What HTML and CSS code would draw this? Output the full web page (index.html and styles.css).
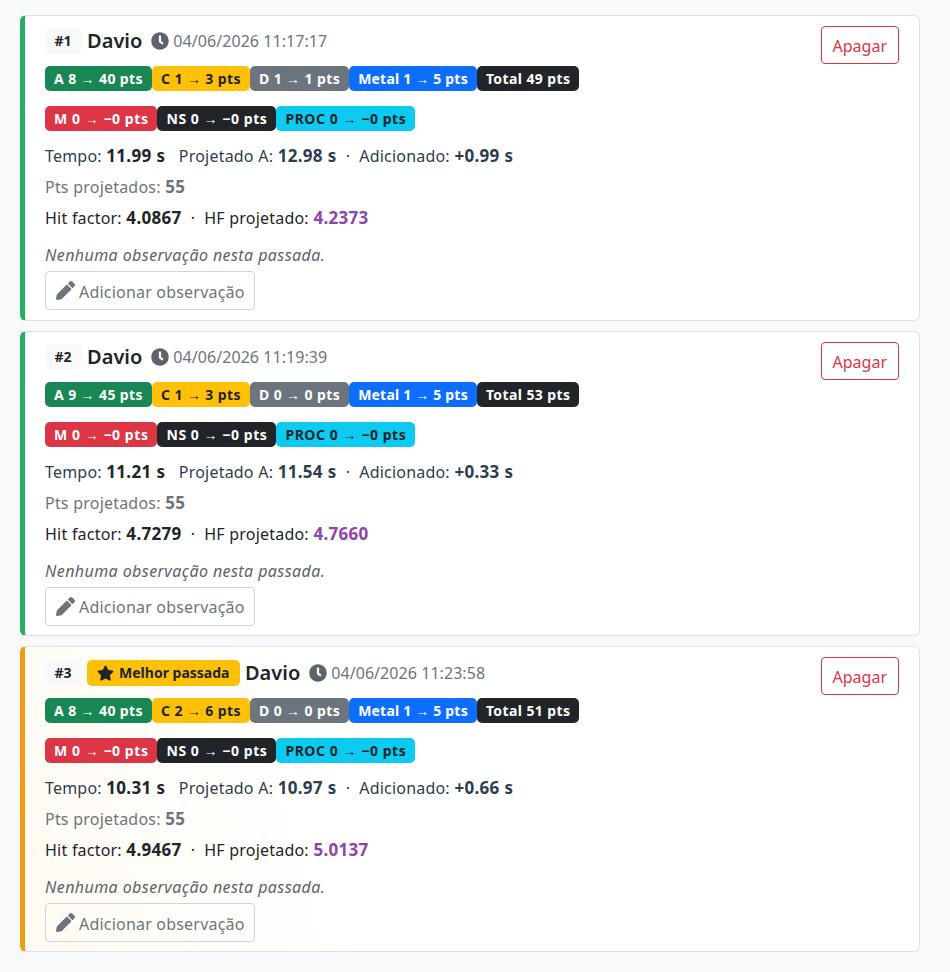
FILE: index.html
```html
<!DOCTYPE html>
<html lang="pt-BR">

<head>
    <meta charset="UTF-8">
    <meta name="viewport" content="width=device-width, initial-scale=1.0">
    <title>Passadas</title>
    <link rel="stylesheet" href="styles.css">
</head>

<body>
    <svg class="icon-defs" aria-hidden="true">
        <symbol id="i-clock" viewBox="0 0 512 512"><path d="M256,8C119,8,8,119,8,256S119,504,256,504,504,393,504,256,393,8,256,8Zm92.49,313h0l-20,25a16,16,0,0,1-22.49,2.5h0l-67-49.72a40,40,0,0,1-15-31.23V112a16,16,0,0,1,16-16h32a16,16,0,0,1,16,16V256l58,42.5A16,16,0,0,1,348.49,321Z"/></symbol>
        <symbol id="i-pencil" viewBox="0 0 512 512"><path d="M497.9 142.1l-46.1 46.1c-4.7 4.7-12.3 4.7-17 0l-111-111c-4.7-4.7-4.7-12.3 0-17l46.1-46.1c18.7-18.7 49.1-18.7 67.9 0l60.1 60.1c18.8 18.7 18.8 49.1 0 67.9zM284.2 99.8L21.6 362.4.4 483.9c-2.9 16.4 11.4 30.6 27.8 27.8l121.5-21.3 262.6-262.6c4.7-4.7 4.7-12.3 0-17l-111-111c-4.8-4.7-12.4-4.7-17.1 0z"/></symbol>
        <symbol id="i-star" viewBox="0 0 576 512"><path d="M259.3 17.8L194 150.2 47.9 171.5c-26.2 3.8-36.7 36.1-17.9 54.6l105.7 103-25 145.5c-4.5 26.3 23.2 46 46.4 33.7L288 439.6l130.7 68.7c23.2 12.2 50.9-7.4 46.4-33.7l-25-145.5 105.7-103c18.8-18.5 8.3-50.8-17.9-54.6L382 150.2 316.7 17.8c-11.7-23.6-45.6-23.9-57.4 0z"/></symbol>
    </svg>

    <div class="list">
        <div class="pass-card">
            <div class="pass-top">
                <div class="pass-main">
                    <div class="pass-title">
                        <span class="pass-num">#1</span>
                        <span class="pass-name">Davio</span>
                        <span class="pass-date"><svg class="icon"><use href="#i-clock"/></svg>04/06/2026 11:17:17</span>
                    </div>
                    <div class="badges">
                        <span class="badge bg-green">A 8 → 40 pts</span>
                        <span class="badge bg-yellow">C 1 → 3 pts</span>
                        <span class="badge bg-gray">D 1 → 1 pts</span>
                        <span class="badge bg-blue">Metal 1 → 5 pts</span>
                        <span class="badge bg-dark">Total 49 pts</span>
                    </div>
                    <div class="badges badges-penalty">
                        <span class="badge bg-red">M 0 → −0 pts</span>
                        <span class="badge bg-dark">NS 0 → −0 pts</span>
                        <span class="badge bg-cyan">PROC 0 → −0 pts</span>
                    </div>
                </div>
                <button class="btn-delete">Apagar</button>
            </div>
            <div class="line line-time">Tempo: <b class="strong-dark">11.99 s</b> &nbsp; Projetado A: <b>12.98 s</b> &nbsp;·&nbsp; Adicionado: <b>+0.99 s</b></div>
            <div class="line line-muted">Pts projetados: <b>55</b></div>
            <div class="line">Hit factor: <b>4.0867</b> &nbsp;·&nbsp; HF projetado: <b class="hf">4.2373</b></div>
            <div class="note">Nenhuma observação nesta passada.</div>
            <button class="btn-note"><svg class="icon"><use href="#i-pencil"/></svg>Adicionar observação</button>
        </div>

        <div class="pass-card">
            <div class="pass-top">
                <div class="pass-main">
                    <div class="pass-title">
                        <span class="pass-num">#2</span>
                        <span class="pass-name">Davio</span>
                        <span class="pass-date"><svg class="icon"><use href="#i-clock"/></svg>04/06/2026 11:19:39</span>
                    </div>
                    <div class="badges">
                        <span class="badge bg-green">A 9 → 45 pts</span>
                        <span class="badge bg-yellow">C 1 → 3 pts</span>
                        <span class="badge bg-gray">D 0 → 0 pts</span>
                        <span class="badge bg-blue">Metal 1 → 5 pts</span>
                        <span class="badge bg-dark">Total 53 pts</span>
                    </div>
                    <div class="badges badges-penalty">
                        <span class="badge bg-red">M 0 → −0 pts</span>
                        <span class="badge bg-dark">NS 0 → −0 pts</span>
                        <span class="badge bg-cyan">PROC 0 → −0 pts</span>
                    </div>
                </div>
                <button class="btn-delete">Apagar</button>
            </div>
            <div class="line line-time">Tempo: <b class="strong-dark">11.21 s</b> &nbsp; Projetado A: <b>11.54 s</b> &nbsp;·&nbsp; Adicionado: <b>+0.33 s</b></div>
            <div class="line line-muted">Pts projetados: <b>55</b></div>
            <div class="line">Hit factor: <b>4.7279</b> &nbsp;·&nbsp; HF projetado: <b class="hf">4.7660</b></div>
            <div class="note">Nenhuma observação nesta passada.</div>
            <button class="btn-note"><svg class="icon"><use href="#i-pencil"/></svg>Adicionar observação</button>
        </div>

        <div class="pass-card best">
            <div class="pass-top">
                <div class="pass-main">
                    <div class="pass-title">
                        <span class="pass-num">#3</span>
                        <span class="best-tag"><svg class="icon"><use href="#i-star"/></svg>Melhor passada</span>
                        <span class="pass-name">Davio</span>
                        <span class="pass-date"><svg class="icon"><use href="#i-clock"/></svg>04/06/2026 11:23:58</span>
                    </div>
                    <div class="badges">
                        <span class="badge bg-green">A 8 → 40 pts</span>
                        <span class="badge bg-yellow">C 2 → 6 pts</span>
                        <span class="badge bg-gray">D 0 → 0 pts</span>
                        <span class="badge bg-blue">Metal 1 → 5 pts</span>
                        <span class="badge bg-dark">Total 51 pts</span>
                    </div>
                    <div class="badges badges-penalty">
                        <span class="badge bg-red">M 0 → −0 pts</span>
                        <span class="badge bg-dark">NS 0 → −0 pts</span>
                        <span class="badge bg-cyan">PROC 0 → −0 pts</span>
                    </div>
                </div>
                <button class="btn-delete">Apagar</button>
            </div>
            <div class="line line-time">Tempo: <b class="strong-dark">10.31 s</b> &nbsp; Projetado A: <b>10.97 s</b> &nbsp;·&nbsp; Adicionado: <b>+0.66 s</b></div>
            <div class="line line-muted">Pts projetados: <b>55</b></div>
            <div class="line">Hit factor: <b>4.9467</b> &nbsp;·&nbsp; HF projetado: <b class="hf">5.0137</b></div>
            <div class="note">Nenhuma observação nesta passada.</div>
            <button class="btn-note"><svg class="icon"><use href="#i-pencil"/></svg>Adicionar observação</button>
        </div>
    </div>
</body>

</html>
```

FILE: styles.css
```css
body {
    font-family: "Noto Sans", "Open Sans", Arial, sans-serif;
    font-size: 16px;
    line-height: 24px;
    background-color: #f8f9fa;
    color: #212529;
    margin: 0;
    padding: 15px 30px 20px 20px;
}

.icon-defs {
    display: none;
}

.icon {
    width: 1em;
    height: 1em;
    fill: currentColor;
    flex: none;
}

.list {
    display: flex;
    flex-direction: column;
    gap: 10px;
}

.pass-card {
    background-color: #fff;
    border: 1px solid #dee2e6;
    border-left: 5px solid #27ae60;
    border-radius: 6px;
    padding: 10px 20px;
    height: 305.6px;
    box-sizing: border-box;
}

.pass-card.best {
    border-left-color: #f39c12;
    background: linear-gradient(75deg, #fffbf2 0%, #fff 35%);
}

.pass-top {
    display: flex;
    justify-content: space-between;
    align-items: flex-start;
}

.pass-title {
    display: flex;
    align-items: center;
    margin-top: 2px;
    height: 26px;
}

.best .pass-title {
    height: 27px;
}

.pass-num {
    background-color: #f8f9fa;
    border-radius: 4px;
    font-size: 14px;
    font-weight: 700;
    padding: 0 9.5px;
    line-height: 26px;
    margin-right: 6px;
}

.best .pass-num {
    line-height: 24px;
}

.best-tag {
    display: flex;
    align-items: center;
    gap: 5px;
    background-color: #ffc107;
    border-radius: 5px;
    font-size: 14px;
    font-weight: 700;
    padding: 0 10.5px 0 10px;
    line-height: 26px;
    margin-right: 5px;
}

.best-tag .icon {
    width: 17px;
    height: 16px;
}

.pass-name {
    font-size: 20px;
    font-weight: 600;
    margin-right: 9px;
}

.pass-date {
    display: flex;
    align-items: center;
    gap: 4px;
    color: #6c757d;
    letter-spacing: .06px;
}

.pass-date .icon {
    width: 18px;
    height: 18px;
    color: #5c636a;
}

.badges {
    display: flex;
    margin-top: 12px;
}

.badges + .badges {
    margin-top: 15px;
}

.badge {
    font-size: 14px;
    font-weight: 700;
    line-height: 25px;
    padding: 0 9px;
    border-radius: 5px;
    color: #fff;
    letter-spacing: .4px;
}

.badge.bg-blue {
    letter-spacing: .2px;
}

.badges-penalty .badge {
    letter-spacing: .55px;
}

.bg-green { background-color: #198754; }
.bg-yellow { background-color: #ffc107; color: #212529; }
.bg-gray { background-color: #6c757d; }
.bg-blue { background-color: #0d6efd; }
.bg-dark { background-color: #212529; }
.bg-red { background-color: #dc3545; }
.bg-cyan { background-color: #0dcaf0; color: #212529; }

.btn-delete {
    font: inherit;
    color: #dc3545;
    background: transparent;
    border: 1px solid #dc3545;
    border-radius: 4px;
    padding: 7px 11px 5px;
    height: 38px;
}

.line {
    margin-top: 7px;
    letter-spacing: .2px;
    word-spacing: .18px;
}

.line b {
    font-size: 17px;
    letter-spacing: .3px;
}

.line-time {
    color: #2c3e50;
    margin-top: 13px;
}

.line-muted {
    color: #6c757d;
}

.hf {
    color: #8e44ad;
}

.strong-dark {
    color: #212529;
}

.note {
    font-style: italic;
    color: #5c636a;
    margin-top: 13px;
    letter-spacing: .42px;
}

.btn-note {
    display: flex;
    align-items: center;
    gap: 4px;
    font: inherit;
    color: #6c757d;
    background: transparent;
    border: 1px solid #ced4da;
    border-radius: 4px;
    padding: 7px 9px 5px 10px;
    height: 39px;
    margin-top: 4px;
    letter-spacing: .2px;
}

.btn-note .icon {
    width: 19px;
    height: 19px;
    margin-top: -2px;
}
```
